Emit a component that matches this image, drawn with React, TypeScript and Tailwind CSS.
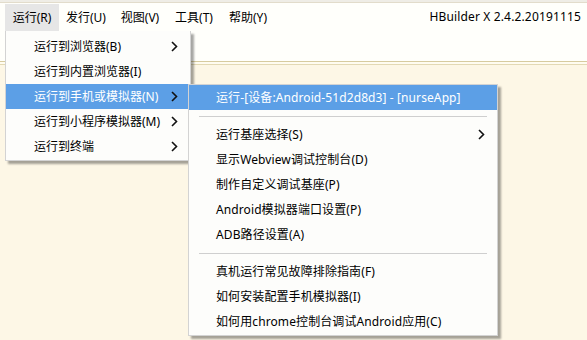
import React from "react";

const Chevron = () => (
  <svg width="7" height="11" viewBox="0 0 7 11" className="shrink-0">
    <polyline points="1,1 5.5,5.5 1,10" fill="none" stroke="#111" strokeWidth="1.6" />
  </svg>
);

const font = "font-['Noto_Sans','Noto_Sans_CJK_SC',sans-serif]";

const menus = ["运行(R)", "发行(U)", "视图(V)", "工具(T)", "帮助(Y)"];

const runItems: { label: string; sub: boolean; active?: boolean }[] = [
  { label: "运行到浏览器(B)", sub: true },
  { label: "运行到内置浏览器(I)", sub: false },
  { label: "运行到手机或模拟器(N)", sub: true, active: true },
  { label: "运行到小程序模拟器(M)", sub: true },
  { label: "运行到终端", sub: true },
];

type SubItem = { label?: string; sub?: boolean; active?: boolean; sep?: boolean };
const subItems: SubItem[] = [
  { label: "运行-[设备:Android-51d2d8d3] - [nurseApp]", active: true },
  { sep: true },
  { label: "运行基座选择(S)", sub: true },
  { label: "显示Webview调试控制台(D)" },
  { label: "制作自定义调试基座(P)" },
  { label: "Android模拟器端口设置(P)" },
  { label: "ADB路径设置(A)" },
  { sep: true },
  { label: "真机运行常见故障排除指南(F)" },
  { label: "如何安装配置手机模拟器(I)" },
  { label: "如何用chrome控制台调试Android应用(C)" },
];

export default function App() {
  return (
    <div className={`relative w-[587px] h-[340px] overflow-hidden bg-[#fdf7e6] text-[12px] text-black ${font}`}>
      <div className="h-[3px] bg-[#efede6] border-b border-[#e2dccb]" />
      <div className="h-[28px] bg-[#fffffb] flex items-stretch">
        <div className="flex pl-[5px] pt-[1px]">
          {menus.map((m, i) => (
            <div
              key={m}
              className={`w-[54px] flex items-center justify-center ${i === 0 ? "bg-[#e6e6e6]" : ""}`}
            >
              {m}
            </div>
          ))}
        </div>
        <div className="ml-auto pr-[6px] flex items-center tracking-[0.15px]">HBuilder X 2.4.2.20191115</div>
      </div>
      <div className="h-[31px] bg-[#fffffb] border-b border-[#d7cb9f]" />
      <div className="h-[3px] bg-[#fffcf0] border-b border-[#e3d9b4]" />

      {/* dropdown */}
      <div className="absolute left-[5px] top-[31px] w-[186px] bg-[#fdfdfb] border border-[#d3d3d3] border-t-0 pt-[3px] pb-[1px] shadow-[3px_3px_2px_rgba(0,0,0,0.35)]">
        {runItems.map((it) => (
          <div
            key={it.label}
            className={`h-[25px] mr-[2px] flex items-center pl-[28px] pr-[10px] ${
              it.active ? "bg-[#5c9fe6] text-white" : ""
            }`}
          >
            <span className="flex-1">{it.label}</span>
            {it.sub && <Chevron />}
          </div>
        ))}
      </div>

      {/* submenu */}
      <div className="absolute left-[188px] top-[84px] w-[310px] bg-[#fdfdfb] border border-[#d3d3d3] pb-[1px] shadow-[3px_3px_2px_rgba(0,0,0,0.35)]">
        {subItems.map((it, i) =>
          it.sep ? (
            <div key={i} className="h-[12px] flex items-center px-[10px]">
              <div className="h-px w-full bg-[#cfcfcf]" />
            </div>
          ) : (
            <div
              key={i}
              className={`h-[25px] flex items-center pl-[27px] pr-[12px] ${
                it.active ? "bg-[#5c9fe6] text-white" : ""
              }`}
            >
              <span className="flex-1 tracking-[0.1px]">{it.label}</span>
              {it.sub && <Chevron />}
            </div>
          )
        )}
      </div>
    </div>
  );
}
